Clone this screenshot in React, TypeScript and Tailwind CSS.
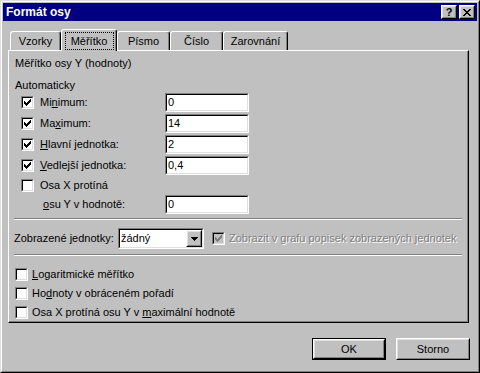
import type { ReactNode } from 'react';

const CHECK_COLS = [2, 3, 4, 3, 2, 1, 0];

function Check({ checked = false, disabled = false }: { checked?: boolean; disabled?: boolean }) {
  return (
    <span className="block w-[13px] h-[13px] shrink-0 border border-t-[#808080] border-l-[#808080] border-r-white border-b-white">
      <span
        className={`relative block w-full h-full border border-t-black border-l-black border-r-[#dfdfdf] border-b-[#dfdfdf] ${
          disabled ? 'bg-[#c0c0c0]' : 'bg-white'
        }`}
      >
        {checked && (
          <svg
            className="absolute left-px top-px"
            width="7"
            height="7"
            viewBox="0 0 7 7"
            shapeRendering="crispEdges"
          >
            {CHECK_COLS.map((y, x) => (
              <rect key={x} x={x} y={y} width="1" height="3" fill={disabled ? '#808080' : '#000'} />
            ))}
          </svg>
        )}
      </span>
    </span>
  );
}

function Field({ value }: { value: string }) {
  return (
    <div className="w-[84px] h-[19px] shrink-0 border border-t-[#808080] border-l-[#808080] border-r-white border-b-white">
      <div className="h-full flex items-center pl-px bg-white border border-t-black border-l-black border-r-[#dfdfdf] border-b-[#dfdfdf]">
        {value}
      </div>
    </div>
  );
}

function Raised({ className, children }: { className: string; children?: ReactNode }) {
  return (
    <div className={`shrink-0 bg-[#c0c0c0] text-black border border-t-white border-l-white border-r-black border-b-black ${className}`}>
      <div className="h-full flex items-center justify-center border border-t-[#dfdfdf] border-l-[#dfdfdf] border-r-[#808080] border-b-[#808080]">
        {children}
      </div>
    </div>
  );
}

function Row({ label, value }: { label: ReactNode; value: string }) {
  return (
    <div className="h-[21px] flex items-center pl-[12px]">
      <Check checked />
      <span className="ml-[6px] w-[125px]">{label}</span>
      <Field value={value} />
    </div>
  );
}

function Option({ label }: { label: ReactNode }) {
  return (
    <div className="h-[19px] flex items-center pl-[6px]">
      <Check />
      <span className="ml-[4px]">{label}</span>
    </div>
  );
}

const tabs = [
  { name: 'Vzorky', w: 'w-[51px]' },
  { name: 'Měřítko', w: 'w-[56px]', active: true },
  { name: 'Písmo', w: 'w-[53px]' },
  { name: 'Číslo', w: 'w-[53px]' },
  { name: 'Zarovnání', w: 'w-[65px]' },
];

export default function App() {
  return (
    <div className="w-[480px] h-[373px] bg-[#c0c0c0] text-black text-[11px] leading-[13px] font-['Liberation_Sans',Arial,sans-serif] border border-t-[#dfdfdf] border-l-[#dfdfdf] border-r-black border-b-black">
      <div className="h-full p-px flex flex-col border border-t-white border-l-white border-r-[#808080] border-b-[#808080]">
        {/* title bar */}
        <div className="h-[18px] shrink-0 bg-[#000080] flex items-center pl-[3px] pr-[2px]">
          <span className="text-white font-bold text-[12px]">Formát osy</span>
          <div className="ml-auto flex items-center gap-[2px]">
            <Raised className="w-[16px] h-[14px]">
              <span className="font-bold text-[11px] leading-[10px] text-black">?</span>
            </Raised>
            <Raised className="w-[16px] h-[14px]">
              <svg className="block" width="8" height="7" viewBox="0 0 8 7" shapeRendering="crispEdges">
                <path d="M0 0h2v1H0zM6 0h2v1H6zM1 1h2v1H1zM5 1h2v1H5zM2 2h4v1H2zM3 3h2v1H3zM2 4h4v1H2zM1 5h2v1H1zM5 5h2v1H5zM0 6h2v1H0zM6 6h2v1H6z" fill="#000" />
              </svg>
            </Raised>
          </div>
        </div>

        {/* tabs */}
        <div className="relative z-10 mt-[8px] ml-[7px] h-[21px] flex items-end">
          {tabs.map((t) =>
            t.active ? (
              <div
                key={t.name}
                className={`${t.w} h-[22px] -mb-px bg-[#c0c0c0] rounded-t-[3px] border-t border-l border-r border-t-white border-l-white border-r-black shadow-[inset_-1px_0_#808080] flex justify-center pt-[2px]`}
              >
                <span className="w-[49px] h-[18px] flex items-center justify-center border border-dotted border-black">
                  {t.name}
                </span>
              </div>
            ) : (
              <div
                key={t.name}
                className={`${t.w} h-[19px] rounded-t-[3px] border-t border-l border-r border-t-white border-l-white border-r-black shadow-[inset_-1px_0_#808080] flex justify-center pt-[3px]`}
              >
                {t.name}
              </div>
            )
          )}
        </div>

        {/* panel */}
        <div className="ml-[5px] w-[461px] h-[273px] shrink-0 border border-t-white border-l-white border-r-black border-b-black">
          <div className="h-full border-r border-b border-r-[#808080] border-b-[#808080]">
            <div className="pl-[6px] pt-[5px] leading-[14px]">Měřítko osy Y (hodnoty)</div>
            <div className="pl-[6px] mt-[8px] leading-[14px]">Automaticky</div>

            <Row label={<>Mi<u>n</u>imum:</>} value="0" />
            <Row label={<>Ma<u>x</u>imum:</>} value="14" />
            <Row label={<><u>H</u>lavní jednotka:</>} value="2" />
            <Row label={<><u>V</u>edlejší jednotka:</>} value="0,4" />

            <div className="h-[18px] flex items-center pl-[12px]">
              <Check />
              <span className="ml-[6px]">Osa X protíná</span>
            </div>
            <div className="h-[21px] flex items-center pl-[34px]">
              <span className="w-[122px]"><u>o</u>su Y v hodnotě:</span>
              <Field value="0" />
            </div>

            <div className="mt-[3px] mx-[5px] border-t border-b border-t-[#808080] border-b-white" />

            <div className="mt-[8px] h-[21px] flex items-center pl-[5px]">
              <span className="w-[104px]">Zobrazené <u>j</u>ednotky:</span>
              <div className="w-[86px] h-[21px] border border-t-[#808080] border-l-[#808080] border-r-white border-b-white">
                <div className="h-full flex bg-white border border-t-black border-l-black border-r-[#dfdfdf] border-b-[#dfdfdf]">
                  <span className="flex-1 flex items-center pl-px">žádný</span>
                  <Raised className="w-[16px] h-full">
                    <svg className="block" width="7" height="4" viewBox="0 0 7 4" shapeRendering="crispEdges">
                      <path d="M0 0h7v1H0zM1 1h5v1H1zM2 2h3v1H2zM3 3h1v1H3z" fill="#000" />
                    </svg>
                  </Raised>
                </div>
              </div>
              <span className="ml-[8px]">
                <Check checked disabled />
              </span>
              <span className="ml-[4px] text-[#808080] [text-shadow:1px_1px_0_#fff]">
                Zobrazit v grafu popisek zobrazených jednotek
              </span>
            </div>

            <div className="mt-[5px] mx-[5px] border-t border-b border-t-[#808080] border-b-white" />

            <div className="mt-[9px]">
              <Option label={<><u>L</u>ogaritmické měřítko</>} />
              <Option label={<>Ho<u>d</u>noty v obráceném pořadí</>} />
              <Option label={<>Osa X protíná osu Y v <u>m</u>aximální hodnotě</>} />
            </div>
          </div>
        </div>

        {/* buttons */}
        <div className="mt-[15px] flex justify-end gap-[10px] pr-[7px]">
          <div className="w-[74px] h-[22px] border border-black">
            <Raised className="w-full h-full">OK</Raised>
          </div>
          <Raised className="w-[74px] h-[22px]">Storno</Raised>
        </div>
      </div>
    </div>
  );
}
